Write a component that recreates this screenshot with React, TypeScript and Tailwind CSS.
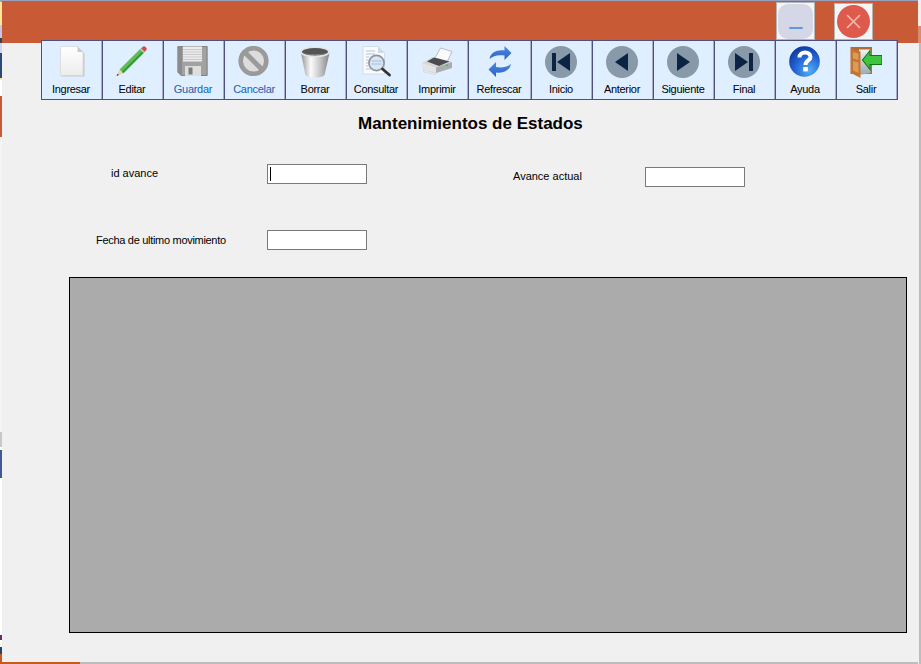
import React from 'react';

function NewIcon() {
  return (
    <svg width="32" height="32" viewBox="0 0 32 32">
      <defs>
        <linearGradient id="page" x1="0" y1="0" x2="0" y2="1">
          <stop offset="0" stopColor="#ffffff" />
          <stop offset="1" stopColor="#ececec" />
        </linearGradient>
      </defs>
      <path d="M6.5 1H23L29.5 7.5V30.5H6.5Z" fill="#c9c9c9" />
      <path d="M5.5 0.5H22.5L28 6V29.5H5.5Z" fill="url(#page)" stroke="#d4d4d4" strokeWidth="0.7" />
      <path d="M22.5 0.5V6H28Z" fill="#c9c9c9" />
    </svg>
  );
}

function PencilIcon() {
  return (
    <svg width="32" height="32" viewBox="0 0 32 32">
      <path d="M5.5 25.5L26.5 4.5" stroke="#5cbd50" strokeWidth="5.4" />
      <path d="M6.5 26.5L27.5 5.5" stroke="#2f8f35" strokeWidth="1.6" />
      <path d="M25 2.5L26.5 1C27.5 0 28.8 0.2 29.8 1.2C30.8 2.2 31 3.4 30 4.5L28.6 6Z" fill="#d9484a" />
      <path d="M24 3.5L25 2.5L28.6 6L27.6 7Z" fill="#c4c4c4" />
      <path d="M3.3 23.8L7.3 27.6L0.5 30Z" fill="#ead3a6" />
      <path d="M1.7 27.8L3 29.1L0.5 30Z" fill="#333333" />
    </svg>
  );
}

function SaveIcon() {
  return (
    <svg width="32" height="32" viewBox="0 0 32 32">
      <path d="M0.5 0H30.5V30H4L0.5 26.5Z" fill="#a2a2a2" />
      <path d="M1 0.5H30V29.5H4.5L1 26Z" fill="none" stroke="#828282" />
      <path d="M1 0.5H5V29H4.5L1 26Z" fill="#8c8c8c" />
      <rect x="6" y="0.5" width="19" height="15" fill="#ececec" />
      <path d="M6 3.5H25M6 6H25M6 8.5H25M6 11H25M6 13.5H25" stroke="#c8c8c8" />
      <rect x="8" y="20" width="16" height="10" fill="#dedede" />
      <rect x="11.5" y="21.5" width="4" height="7" fill="#7c7c7c" />
    </svg>
  );
}

function CancelIcon() {
  return (
    <svg width="32" height="32" viewBox="0 0 32 32">
      <circle cx="15.5" cy="15" r="12.8" fill="#dcdcdc" stroke="#9a9a9a" strokeWidth="4.6" />
      <path d="M7 6.5L24 23.5" stroke="#9a9a9a" strokeWidth="5" />
    </svg>
  );
}

function TrashIcon() {
  return (
    <svg width="32" height="32" viewBox="0 0 32 32">
      <defs>
        <linearGradient id="can" x1="0" y1="0" x2="1" y2="0">
          <stop offset="0" stopColor="#8f8f8f" />
          <stop offset="0.35" stopColor="#fbfbfb" />
          <stop offset="0.65" stopColor="#c9c9c9" />
          <stop offset="1" stopColor="#808080" />
        </linearGradient>
      </defs>
      <path d="M1.5 5L6.5 29C9 32.5 23 32.5 25.5 29L31 5Z" fill="url(#can)" />
      <ellipse cx="16" cy="6" rx="15.4" ry="5.2" fill="#e4e4e4" />
      <ellipse cx="16" cy="5.8" rx="13" ry="3.7" fill="#555555" />
      <path d="M4 6.5C8 9 24 9 28 6.5C24 10 8 10 4 6.5Z" fill="#909090" />
    </svg>
  );
}

function ConsultIcon() {
  return (
    <svg width="32" height="32" viewBox="0 0 32 32">
      <path d="M3 0.5H18L24.5 7V28H3Z" fill="#f8fafc" stroke="#cfd6de" strokeWidth="0.8" />
      <path d="M18 0.5V7H24.5Z" fill="#cdd8e6" />
      <path d="M6 5H15M6 8H15M6 11H9M6 14H8M6 17H8M6 20H8M6 23H10" stroke="#b3c6dc" />
      <circle cx="16.5" cy="17" r="7.6" fill="#d8e6f5" stroke="#8f969e" strokeWidth="1.7" />
      <path d="M11.5 15H21.5M11.5 18H21.5" stroke="#a8bed6" />
      <path d="M22.5 23L29.5 29" stroke="#333333" strokeWidth="2.8" strokeLinecap="round" />
    </svg>
  );
}

function PrinterIcon() {
  return (
    <svg width="32" height="32" viewBox="0 0 32 32">
      <path d="M14 12L19.5 2L31 5.5L26 16Z" fill="#fafafa" stroke="#a5a5a5" strokeWidth="0.7" />
      <path d="M1 17L12 11L30 15.5L31 22L15 27L1 22Z" fill="#d6d6d6" />
      <path d="M6 15.5L13 11.5L28.5 15.5L18 20Z" fill="#4a4c4e" />
      <path d="M1 17L15 21.5V27L1 22Z" fill="#e4e4e4" />
      <path d="M15 21.5L31 16V22L15 27Z" fill="#a9adb0" />
      <path d="M2 24L15 27.5L14 28.5L3 26Z" fill="#f4f4f4" stroke="#b5b5b5" strokeWidth="0.4" />
      <rect x="25" y="18.5" width="2" height="1.5" fill="#44c040" />
    </svg>
  );
}

function RefreshIcon() {
  return (
    <svg width="32" height="32" viewBox="0 0 32 32">
      <defs>
        <linearGradient id="swoop" x1="0" y1="0" x2="0" y2="1">
          <stop offset="0" stopColor="#4d8ae0" />
          <stop offset="1" stopColor="#2a62c8" />
        </linearGradient>
      </defs>
      <path d="M6.5 13C8 6 14 3.5 21.5 4.5V0L28.5 7L21.5 14V9.5C15 8.5 10 9.5 6.5 13Z" fill="url(#swoop)" />
      <path d="M28 18C26.5 25 20 27.5 13 26.5V31L5.5 23.5L13 16V21C19 22 24 21 28 18Z" fill="url(#swoop)" />
    </svg>
  );
}

function NavIcon({ kind }: { kind: 'first' | 'prev' | 'next' | 'last' }) {
  return (
    <svg width="32" height="32" viewBox="0 0 32 32">
      <circle cx="16" cy="16" r="16" fill="#8899a9" />
      {kind === 'first' && <path d="M7 7H11V25H7ZM25 7V25L12 16Z" fill="#0b2444" />}
      {kind === 'prev' && <path d="M22 7V25L9 16Z" fill="#0b2444" />}
      {kind === 'next' && <path d="M10 7V25L23 16Z" fill="#0b2444" />}
      {kind === 'last' && <path d="M25 7H21V25H25ZM7 7V25L20 16Z" fill="#0b2444" />}
    </svg>
  );
}

function HelpIcon() {
  return (
    <svg width="32" height="32" viewBox="0 0 32 32">
      <defs>
        <radialGradient id="orb" cx="0.65" cy="0.8" r="0.85">
          <stop offset="0" stopColor="#55aef5" />
          <stop offset="0.55" stopColor="#2264d4" />
          <stop offset="1" stopColor="#0f3596" />
        </radialGradient>
      </defs>
      <circle cx="15.5" cy="15.5" r="15.3" fill="url(#orb)" />
      <path d="M10.5 11.5C10.5 8 13 6.5 16 6.5C19.5 6.5 21.5 8.5 21.5 11C21.5 14.5 16.5 14.5 16.5 19" fill="none" stroke="#ffffff" strokeWidth="4" />
      <rect x="14.2" y="21" width="4.6" height="4.4" fill="#ffffff" />
    </svg>
  );
}

function ExitIcon() {
  return (
    <svg width="32" height="32" viewBox="0 0 32 32">
      <defs>
        <linearGradient id="room" x1="0" y1="0" x2="0" y2="1">
          <stop offset="0" stopColor="#eef3f5" />
          <stop offset="1" stopColor="#9aa8b0" />
        </linearGradient>
      </defs>
      <path d="M0.5 1H22V28H0.5Z" fill="#b9692c" />
      <path d="M9 3.5H20.5V27L9 29Z" fill="url(#room)" />
      <path d="M1 2.5L10.5 5.5V32L1 27Z" fill="#c4752f" />
      <path d="M3 6L8.5 7.8V14L3 12.5ZM3 15L8.5 16.5V27L3 24.5Z" fill="#dc9a58" />
      <path d="M12.5 14L20 4.5V9.5H32V18.5H20V23.5Z" fill="#3fc43f" stroke="#0a7a14" strokeWidth="1.1" />
    </svg>
  );
}

const tools = [
  { label: 'Ingresar', icon: <NewIcon />, w: 'w-[62px]', text: 'text-black' },
  { label: 'Editar', icon: <PencilIcon />, w: 'w-[61px]', text: 'text-black' },
  { label: 'Guardar', icon: <SaveIcon />, w: 'w-[61px]', text: 'text-[#1a5fb4]' },
  { label: 'Cancelar', icon: <CancelIcon />, w: 'w-[61px]', text: 'text-[#1a5fb4]' },
  { label: 'Borrar', icon: <TrashIcon />, w: 'w-[61px]', text: 'text-black' },
  { label: 'Consultar', icon: <ConsultIcon />, w: 'w-[61px]', text: 'text-black' },
  { label: 'Imprimir', icon: <PrinterIcon />, w: 'w-[61px]', text: 'text-black' },
  { label: 'Refrescar', icon: <RefreshIcon />, w: 'w-[63px]', text: 'text-black' },
  { label: 'Inicio', icon: <NavIcon kind="first" />, w: 'w-[61px]', text: 'text-black' },
  { label: 'Anterior', icon: <NavIcon kind="prev" />, w: 'w-[61px]', text: 'text-black' },
  { label: 'Siguiente', icon: <NavIcon kind="next" />, w: 'w-[61px]', text: 'text-black' },
  { label: 'Final', icon: <NavIcon kind="last" />, w: 'w-[61px]', text: 'text-black' },
  { label: 'Ayuda', icon: <HelpIcon />, w: 'w-[61px]', text: 'text-black' },
  { label: 'Salir', icon: <ExitIcon />, w: 'w-[61px]', text: 'text-black' },
];

function LeftStrip() {
  return (
    <div className="flex w-[2px] shrink-0 flex-col bg-white">
      <div className="h-[2px] bg-[#9aa0c0]" />
      <div className="h-[23px] bg-[#ffe89c]" />
      <div className="h-[13px] bg-[#c4c8e0]" />
      <div className="h-[5px] bg-[#3a3f55]" />
      <div className="h-[10px] bg-[#cfd8e8]" />
      <div className="h-[25px] bg-[#2c4a78]" />
      <div className="h-[2px] bg-[#ffe89c]" />
      <div className="h-[16px] bg-white" />
      <div className="h-[41px] bg-[#c85a35]" />
      <div className="h-[295px] bg-[#f4f4f4]" />
      <div className="h-[15px] bg-[#c8c8c8]" />
      <div className="h-[3px] bg-white" />
      <div className="h-[28px] bg-[#3f5a90]" />
      <div className="h-[157px] bg-white" />
      <div className="h-[5px] bg-[#6a3060]" />
      <div className="h-[7px] bg-white" />
      <div className="h-[7px] bg-[#2c3f68]" />
      <div className="flex-1 bg-[#c85a1c]" />
    </div>
  );
}

export default function App() {
  return (
    <div className="flex h-[664px] w-[921px] overflow-hidden bg-[#f0f0f0] font-['Liberation_Sans',sans-serif] text-[11px] text-black">
      <LeftStrip />
      <div className="flex min-w-0 flex-1 flex-col">
        <div className="h-px bg-[#9aa0c0]" />
        <header className="flex h-[42px] shrink-0 items-start bg-[#c85a35]">
          <div className="ml-[774px] mt-[1px] flex h-[38px] w-[39px] items-center justify-center border border-[#b4b4b4] bg-[#f5f5f5]">
            <div className="flex h-[35px] w-[35px] items-end justify-center rounded-[10px] bg-[#d6d7e6] pb-[10px]">
              <div className="h-[2px] w-[14px] rounded-full bg-[#5f97e0]" />
            </div>
          </div>
          <div className="ml-[19px] mt-[2px] flex h-[37px] w-[39px] items-center justify-center border border-[#b4b4b4] bg-[#f5f5f5]">
            <div className="flex h-[33px] w-[33px] items-center justify-center rounded-full bg-[#dd5a4c]">
              <svg width="15" height="15" viewBox="0 0 15 15">
                <path d="M1 1L14 14M14 1L1 14" stroke="#f2bcae" strokeWidth="1.6" />
              </svg>
            </div>
          </div>
        </header>

        <div className="z-10 ml-[39px] mt-[-3px] flex h-[60px] w-[857px]">
          {tools.map((tool, i) => (
            <div
              key={tool.label}
              className={`flex ${tool.w} h-[60px] shrink-0 flex-col items-center border-y border-r border-[#50507f] bg-[#dfefff] pr-[2px] pt-[5px] shadow-[inset_-1px_0_0_#a9aacf] ${i === 0 ? 'border-l' : ''}`}
            >
              <div className="h-[32px] w-[32px] shrink-0">{tool.icon}</div>
              <span className={`mt-[4px] leading-[14px] tracking-[-0.3px] whitespace-nowrap ${tool.text}`}>{tool.label}</span>
            </div>
          ))}
        </div>

        <h1 className="ml-[356px] mt-[14px] text-[17px] leading-[20px] font-bold whitespace-nowrap">
          Mantenimientos de Estados
        </h1>

        <div className="mt-[30px] flex items-start">
          <label className="ml-[109px] mt-[2px] w-[156px] leading-[14px]">id avance</label>
          <div className="flex h-[20px] w-[100px] items-center border border-[#7a7a7a] bg-white pl-[2px]">
            <div className="h-[14px] w-px bg-black" />
          </div>
          <label className="ml-[146px] mt-[5px] w-[132px] leading-[14px]">Avance actual</label>
          <div className="mt-[3px] h-[20px] w-[100px] border border-[#7a7a7a] bg-white" />
        </div>

        <div className="mt-[43px] flex items-start">
          <label className="ml-[94px] mt-[3px] w-[171px] leading-[14px] tracking-[-0.3px] whitespace-nowrap">Fecha de ultimo movimiento</label>
          <div className="h-[20px] w-[100px] border border-[#7a7a7a] bg-white" />
        </div>

        <div className="ml-[67px] mt-[27px] h-[356px] w-[838px] border border-black bg-[#ababab]" />

        <div className="mt-auto flex h-[2px]">
          <div className="w-[78px] bg-[#c85a1c]" />
          <div className="flex-1 bg-[#bdbdbd]" />
        </div>
      </div>
      <div className="flex h-[664px] w-[3px] shrink-0 flex-col">
        <div className="h-[26px] bg-[#f2eeec]" />
        <div className="h-[17px] bg-[#d98a6f]" />
        <div className="flex flex-1">
          <div className="w-px bg-[#f0f0f0]" />
          <div className="flex-1 bg-[#bdbdbd]" />
        </div>
      </div>
    </div>
  );
}
